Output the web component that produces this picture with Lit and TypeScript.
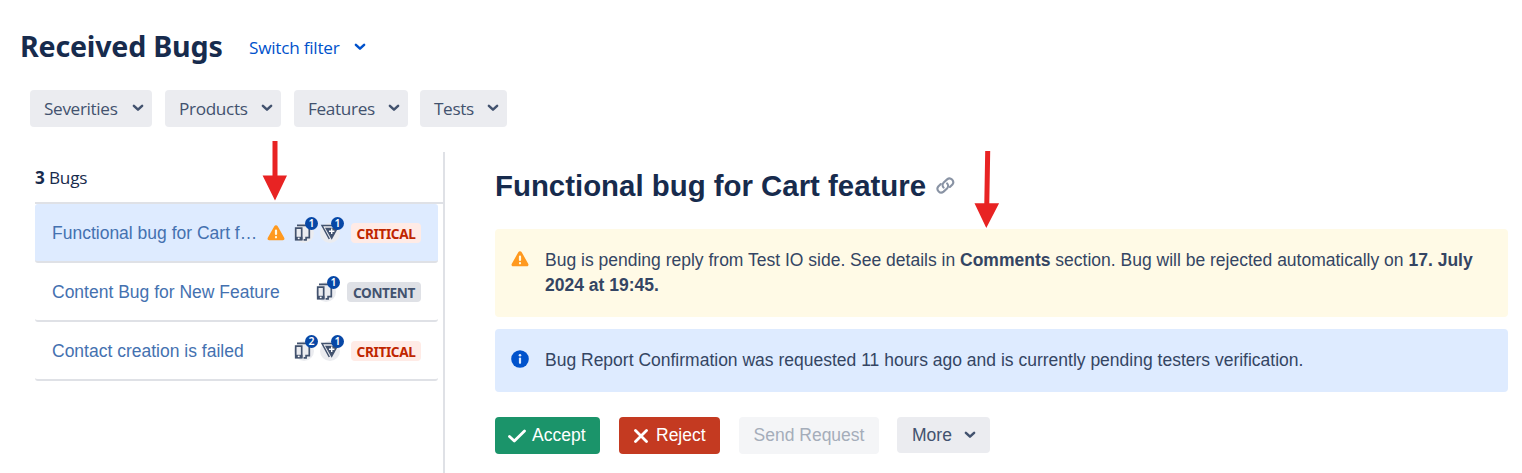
import { LitElement, html, css, svg, nothing } from "lit";
import { customElement, property } from "lit/decorators.js";

const warning = html`<svg class="warn" width="18" height="16" viewBox="0 0 18 16">
  <path fill="#ff991f" d="M7.300 1.200a1.900 1.900 0 0 1 3.400 0l6.500 11.500c.7 1.200 0 2.600-1.400 2.600H2.200C.8 15.300.1 13.900.8 12.700Z" />
  <path stroke="#fffae6" stroke-width="2.200" stroke-linecap="round" d="M9 5.500v3.500M9 12.200v.1" />
</svg>`;

@customElement("chevron-icon")
class ChevronIcon extends LitElement {
  static styles = css`
    :host { display: block; width: 12px; height: 8px; position: relative; top: -0.5px; left: -0.5px; }
    svg { display: block; }
    path { fill: none; stroke: currentColor; stroke-width: 2.5; stroke-linecap: round; stroke-linejoin: round; }
  `;
  render() {
    return html`<svg width="12" height="8" viewBox="0 0 12 8"><path d="M1.900 1.900 6 5.700l4.100-3.800" /></svg>`;
  }
}

@customElement("count-icon")
class CountIcon extends LitElement {
  @property() kind = "devices";
  @property({ type: Number }) count = 1;
  static styles = css`
    :host { display: block; position: relative; width: 20px; height: 20px; border-radius: 50%; background: #ebecf0; }
    svg { display: block; overflow: visible; }
    .badge {
      position: absolute; left: 11px; top: -6px; width: 13px; height: 13px; border-radius: 50%;
      background: #0747a6; color: #fff; text-align: center;
      font: 600 10.500px/13px "Noto Sans", sans-serif;
    }
  `;
  render() {
    const devices = svg`<g fill="none" stroke="#42526e" stroke-width="1.700">
      <path d="M3 2.400H14M15.300 6v8.700h-3.200v2.200H9.600" />
      <path d="M1.700 5.200h6v11.500h-6Z" />
      <path d="M1 15.500h7.400" stroke-width="3.400" />
      <path d="M3.800 15.400h1.800" stroke="#fff" stroke-width="1.500" /></g>`;
    const triangle = svg`<path d="M18 2.600H2L9.300 16" fill="none" stroke="#42526e" stroke-width="1.500" />
      <path d="M5 4.700h13.300L11.700 16.700Z" fill="#42526e" />
      <path d="M11.700 5.600v5.400M9 8.300h5.400" stroke="#fff" stroke-width="1.400" />`;
    return html`<svg width="20" height="20" viewBox="0 0 20 20">${this.kind === "devices" ? devices : triangle}</svg>
      <span class="badge">${this.count}</span>`;
  }
}

interface Bug { title: string; severity: "CRITICAL" | "CONTENT"; pending: boolean; devices: number; copies: number; }

const bugs: Bug[] = [
  { title: "Functional bug for Cart f…", severity: "CRITICAL", pending: true, devices: 1, copies: 1 },
  { title: "Content Bug for New Feature", severity: "CONTENT", pending: false, devices: 1, copies: 0 },
  { title: "Contact creation is failed", severity: "CRITICAL", pending: false, devices: 2, copies: 1 },
];

const filters = [
  { label: "Severities", size: "w1" },
  { label: "Products", size: "w2" },
  { label: "Features", size: "w3" },
  { label: "Tests", size: "w4" },
];

@customElement("app-root")
class AppRoot extends LitElement {
  static styles = css`
    :host {
      display: block; position: relative; width: 1522px; height: 473px; overflow: hidden;
      background: #fff; color: #172b4d; font-family: "Liberation Sans", Arial, sans-serif; box-sizing: border-box;
    }
    * { box-sizing: border-box; }
    .segoe { font-family: "Open Sans", "Noto Sans", sans-serif; }
    header { display: flex; align-items: center; height: 90px; padding: 2px 0 0 20px; }
    h1 { margin: 0; width: 229px; font: 700 28.600px/40px "Noto Sans", sans-serif; letter-spacing: -0.2px; white-space: nowrap; }
    .switch { display: flex; align-items: center; width: 117px; padding-top: 2px; justify-content: space-between; color: #0052cc; font-size: 17.200px; letter-spacing: -0.25px; white-space: nowrap; }
    .filters { display: flex; padding-left: 30px; height: 62px; align-items: flex-start; }
    .filter {
      display: flex; align-items: center; justify-content: space-between; height: 37px; padding: 0 8px 0 14px;
      border-radius: 4px; background: #ebecf0; color: #42526e; font-size: 17.200px; letter-spacing: -0.35px; white-space: nowrap;
    }
    .w1 { width: 122px; margin-right: 13px; }
    .w2 { width: 116px; margin-right: 13px; }
    .w3 { width: 114px; margin-right: 12px; }
    .w4 { width: 87px; }
    main { display: flex; height: 321px; }
    aside { width: 445px; padding-left: 35px; border-right: 2px solid #dfe1e6; }
    .total { height: 52px; line-height: 51px; border-bottom: 2px solid #dfe1e6; font-size: 17.200px; letter-spacing: -0.2px; }
    .bug { display: flex; align-items: center; width: 403px; height: 59px; padding: 0 17px; border-bottom: 2px solid #dfe1e6; border-radius: 3px; }
    .bug.active { background: #deebff; }
    .title { color: #4471b0; font-size: 17.500px; line-height: 26px; white-space: nowrap; }
    .marks { display: flex; align-items: center; margin-left: auto; gap: 6px; }
    .marks .warn { margin-right: 3px; }
    .tag { margin-left: 5px; height: 20px; width: 70px; border-radius: 4px; text-align: center; font: 700 13.600px/21px "Noto Sans", sans-serif; letter-spacing: -0.35px; white-space: nowrap; }
    .critical { background: #ffebe6; color: #bf2600; }
    .content { background: #dfe1e6; color: #42526e; width: 74px; }
    section { width: 1063px; padding: 17px 0 0 50px; }
    .heading { display: flex; align-items: center; height: 34px; gap: 10px; }
    .heading svg { margin-top: -2px; }
    h2 { margin: 0; font-size: 29.400px; line-height: 34px; font-weight: 700; white-space: nowrap; }
    .notice { display: flex; width: 1013px; border-radius: 4px; padding: 19px 16px 0; font-size: 17.500px; line-height: 25px; color: #344563; }
    .notice svg { flex: none; margin: 3px 16px 0 0; }
    .blue svg { margin-top: 2px; }
    .yellow { height: 88px; margin-top: 26px; background: #fffae6; }
    .blue { height: 63px; margin-top: 12px; background: #deebff; }
    .actions { display: flex; margin-top: 25px; font-size: 17.500px; }
    .btn { display: flex; align-items: center; height: 37px; border-radius: 4px; color: #fff; white-space: nowrap; }
    .accept { width: 105px; padding-left: 13px; gap: 6px; background: #1b946a; margin-right: 19px; }
    .reject { width: 101px; padding-left: 15px; gap: 8px; background: #c43a21; margin-right: 19px; }
    .request { width: 140px; justify-content: center; background: #f4f5f7; color: #a5adba; margin-right: 18px; }
    .more { width: 93px; height: 36px; padding: 0 14px 0 15px; justify-content: space-between; background: #ebecf0; color: #42526e; }
    .pointer { position: absolute; width: 26px; height: 78px; }
    .pointer svg { display: block; }
    .to-list { left: 262px; top: 141px; height: 60px; }
    .to-notice { left: 974px; top: 151px; }
  `;

  bug(b: Bug, i: number) {
    return html`<div class="bug ${i === 0 ? "active" : ""}">
      <span class="title">${b.title}</span>
      <span class="marks">
        ${b.pending ? warning : nothing}
        <count-icon kind="devices" .count=${b.devices}></count-icon>
        ${b.copies ? html`<count-icon kind="triangle" .count=${b.copies}></count-icon>` : nothing}
        <span class="tag ${b.severity.toLowerCase()}">${b.severity}</span>
      </span>
    </div>`;
  }

  render() {
    return html`
      <header>
        <h1>Received Bugs</h1>
        <span class="switch segoe">Switch filter <chevron-icon></chevron-icon></span>
      </header>
      <nav class="filters segoe">
        ${filters.map((f) => html`<span class="filter ${f.size}">${f.label}<chevron-icon></chevron-icon></span>`)}
      </nav>
      <main>
        <aside>
          <div class="total segoe"><b>3</b> Bugs</div>
          ${bugs.map((b, i) => this.bug(b, i))}
        </aside>
        <section>
          <div class="heading">
            <h2>Functional bug for Cart feature</h2>
            <svg width="19" height="19" viewBox="0 0 19 19" fill="none" stroke="#8993a4" stroke-width="2.100" stroke-linecap="round">
              <path d="M7.600 11.600a3.600 3.600 0 0 1 .1-5l3.400-3.200a3.700 3.700 0 0 1 5.300 5.100l-2.500 2.400" />
              <path d="M11.100 7.400a3.600 3.600 0 0 1-.1 5l-3.400 3.200a3.700 3.700 0 0 1-5.300-5.100l2.500-2.400" />
            </svg>
          </div>
          <div class="notice yellow">${warning}
            <div>Bug is pending reply from Test IO side. See details in <b>Comments</b> section. Bug will be rejected automatically on <b>17. July 2024 at 19:45.</b></div>
          </div>
          <div class="notice blue">
            <svg width="18" height="18" viewBox="0 0 18 18"><circle cx="9" cy="9" r="8.800" fill="#0052cc" />
              <circle cx="9" cy="5.300" r="1.300" fill="#deebff" /><path d="M9 8.500v4.300" stroke="#deebff" stroke-width="2.200" stroke-linecap="round" /></svg>
            <div>Bug Report Confirmation was requested 11 hours ago and is currently pending testers verification.</div>
          </div>
          <div class="actions">
            <span class="btn accept"><svg width="18" height="14" viewBox="0 0 18 14"><path d="m1.500 7.500 4.800 4.500L16.500 2" fill="none" stroke="#fff" stroke-width="2.800" stroke-linecap="round" stroke-linejoin="round" /></svg>Accept</span>
            <span class="btn reject"><svg width="14" height="14" viewBox="0 0 14 14"><path d="m1.500 1.500 11 11m0-11-11 11" stroke="#fff" stroke-width="2.800" stroke-linecap="round" /></svg>Reject</span>
            <span class="btn request">Send Request</span>
            <span class="btn more">More <chevron-icon></chevron-icon></span>
          </div>
        </section>
      </main>
      <div class="pointer to-list"><svg width="26" height="60" viewBox="0 0 26 60"><path fill="#e82323" d="M10.500 0h5v34.500h9.500L13 59.500.6 34.500h9.900Z" /></svg></div>
      <div class="pointer to-notice"><svg width="26" height="78" viewBox="0 0 26 78"><path fill="#e82323" d="M11.200 0h5l-.9 52.300h9.800L12.300 77 .5 52.300h9.800Z" /></svg></div>
    `;
  }
}
